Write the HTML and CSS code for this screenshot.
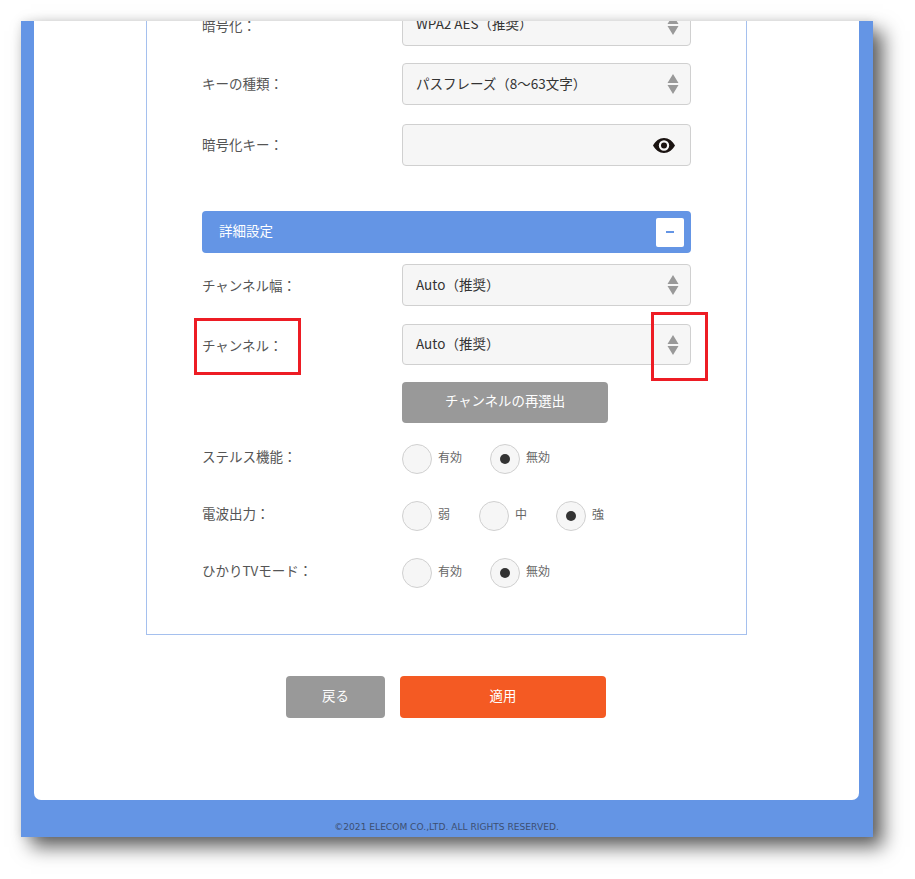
FILE: index.html
```html
<!DOCTYPE html>
<html lang="ja">
<head>
<meta charset="utf-8">
<title>詳細設定</title>
<link rel="stylesheet" href="styles.css">
</head>
<body>
<div class="frame">
  <main class="card">
    <section class="panel">
      <div class="row first">
        <span class="label">暗号化：</span>
        <div class="field"><span>WPA2 AES（推奨）</span><svg class="updown" viewBox="0 0 12 20"><path d="M6 0l5.500 9H.5zM.5 11h11L6 20z"/></svg></div>
      </div>
      <div class="row key-type">
        <span class="label">キーの種類：</span>
        <div class="field"><span>パスフレーズ（8～63文字）</span><svg class="updown" viewBox="0 0 12 20"><path d="M6 0l5.500 9H.5zM.5 11h11L6 20z"/></svg></div>
      </div>
      <div class="row key">
        <span class="label">暗号化キー：</span>
        <div class="field"><span></span><svg class="eye" viewBox="0 0 22 15"><path fill-rule="evenodd" d="M11 0c4.600 0 8.600 3 11 7.500C19.600 12 15.600 15 11 15S2.400 12 0 7.500C2.400 3 6.400 0 11 0zm0 2.300a5.200 5.200 0 1 0 0 10.400 5.200 5.200 0 0 0 0-10.400z"/><circle cx="11" cy="7.500" r="3"/></svg></div>
      </div>
      <div class="section-bar">
        <span class="bar-title">詳細設定</span>
        <span class="toggle"><i></i></span>
      </div>
      <div class="row width">
        <span class="label">チャンネル幅：</span>
        <div class="field"><span>Auto（推奨）</span><svg class="updown" viewBox="0 0 12 20"><path d="M6 0l5.500 9H.5zM.5 11h11L6 20z"/></svg></div>
      </div>
      <div class="row channel">
        <span class="label">チャンネル：</span>
        <div class="field"><span>Auto（推奨）</span><svg class="updown" viewBox="0 0 12 20"><path d="M6 0l5.500 9H.5zM.5 11h11L6 20z"/></svg></div>
      </div>
      <div class="row rescan">
        <span class="label"></span>
        <button class="btn grey wide">チャンネルの再選出</button>
      </div>
      <div class="row stealth">
        <span class="label">ステルス機能：</span>
        <div class="radios">
          <span class="radio"><i></i><b>有効</b></span>
          <span class="radio on"><i></i><b>無効</b></span>
        </div>
      </div>
      <div class="row power">
        <span class="label">電波出力：</span>
        <div class="radios three">
          <span class="radio"><i></i><b>弱</b></span>
          <span class="radio"><i></i><b>中</b></span>
          <span class="radio on"><i></i><b>強</b></span>
        </div>
      </div>
      <div class="row tv">
        <span class="label">ひかりTVモード：</span>
        <div class="radios">
          <span class="radio"><i></i><b>有効</b></span>
          <span class="radio on"><i></i><b>無効</b></span>
        </div>
      </div>
    </section>
    <div class="actions">
      <button class="btn grey back">戻る</button>
      <button class="btn orange apply">適用</button>
    </div>
  </main>
  <footer class="copy">©2021 ELECOM CO.,LTD. ALL RIGHTS RESERVED.</footer>
  <div class="mark mark-label"></div>
  <div class="mark mark-arrow"></div>
</div>
</body>
</html>
```
FILE: styles.css
```css
* { box-sizing: border-box; }
html, body { margin: 0; padding: 0; background: #fff; }
body {
  width: 915px;
  height: 879px;
  overflow: hidden;
  padding: 21px 42px 0 21px;
  font-family: "Noto Sans CJK JP", "Noto Sans", sans-serif;
  font-weight: 400;
  color: #555;
}
.frame {
  position: relative;
  width: 852px;
  height: 816px;
  padding: 0 14px 0 13px;
  background: #6495e5;
  box-shadow: 0 0 9px rgba(0, 0, 0, .1), 10px 10px 18px rgba(0, 0, 0, .62);
}
.card {
  height: 779px;
  padding: 0 0 0 112px;
  background: #fff;
  border-radius: 0 0 7px 7px;
  overflow: hidden;
}
.panel {
  width: 601px;
  height: 631px;
  margin-top: -17px;
  margin-bottom: 41px;
  padding: 0 55px;
  border: 1px solid #a5c0ee;
  border-top: 0;
}
.row { display: flex; align-items: center; }
.label {
  flex: 0 0 200px;
  padding-bottom: 3px;
  font-size: 13.5px;
  line-height: 20px;
}
.first { height: 42px; }
.key-type { height: 42px; margin-top: 17px; }
.key { height: 42px; margin-top: 19px; }
.section-bar { margin-top: 45px; }
.width { height: 42px; margin-top: 11px; }
.width .label, .first .label, .channel .label { padding-bottom: 0; }
.channel { height: 41px; margin-top: 18px; }
.rescan { height: 41px; margin-top: 17px; }
.stealth { height: 30px; margin-top: 21px; }
.power { height: 30px; margin-top: 27px; }
.tv { height: 30px; margin-top: 27px; }
.stealth .label, .power .label, .tv .label { padding-bottom: 7px; }
.field {
  flex: 0 0 289px;
  height: 100%;
  display: flex;
  align-items: center;
  justify-content: space-between;
  padding: 0 15px 0 13px;
  background: #f6f6f6;
  border: 1px solid #d0d0d0;
  border-radius: 4px;
  font-size: 13.5px;
  color: #333;
  line-height: 20px;
}
.field span { padding-bottom: 3px; }
.first .field span { padding-bottom: 4px; }
.width .field span { padding-bottom: 2px; }
.channel .field span { padding-bottom: 4px; }
.updown { width: 12px; height: 20px; margin-right: -4px; fill: #999; }
.eye { width: 22px; height: 15px; fill: #1a1311; }
.section-bar {
  height: 42px;
  width: 489px;
  display: flex;
  align-items: center;
  justify-content: space-between;
  padding: 0 7px 0 17px;
  background: #6495e5;
  border-radius: 4px;
  color: #fff;
  font-size: 13.5px;
}
.bar-title { padding-bottom: 4px; }
.toggle {
  width: 28px;
  height: 29px;
  display: flex;
  align-items: center;
  justify-content: center;
  background: #fff;
  border-radius: 2px;
}
.toggle i { width: 8px; height: 2px; background: #6495e5; }
.btn {
  display: block;
  border: 0;
  padding: 0 0 5px;
  border-radius: 4px;
  color: #fff;
  font: inherit;
  font-size: 13.4px;
  text-align: center;
}
.grey { background: #999; }
.orange { background: #f45a23; }
.wide { width: 206px; height: 41px; }
.radios { display: flex; gap: 28px; }
.radios.three { gap: 29px; }
.radio {
  display: flex;
  align-items: center;
  gap: 6px;
  font-size: 12px;
  line-height: 20px;
  color: #666;
}
.radio b { font-weight: 400; padding-bottom: 4px; }
.radio i {
  position: relative;
  width: 30px;
  height: 30px;
  background: #f6f6f6;
  border: 1px solid #d0d0d0;
  border-radius: 50%;
}
.radio.on i::after {
  content: "";
  position: absolute;
  left: 9px;
  top: 9px;
  width: 10px;
  height: 10px;
  border-radius: 50%;
  background: #333;
}
.actions {
  display: flex;
  gap: 15px;
  padding-left: 140px;
}
.back { width: 99px; height: 42px; }
.apply { width: 206px; height: 42px; }
.copy {
  height: 37px;
  padding-top: 19px;
  text-align: center;
  font-family: "DejaVu Sans", sans-serif;
  font-size: 9.1px;
  line-height: 16px;
  color: #3c4f72;
}
.mark {
  position: absolute;
  border: 3px solid #ed1c24;
}
.mark-label { left: 173px; top: 297px; width: 107px; height: 57px; }
.mark-arrow { left: 630px; top: 291px; width: 57px; height: 69px; }
```
